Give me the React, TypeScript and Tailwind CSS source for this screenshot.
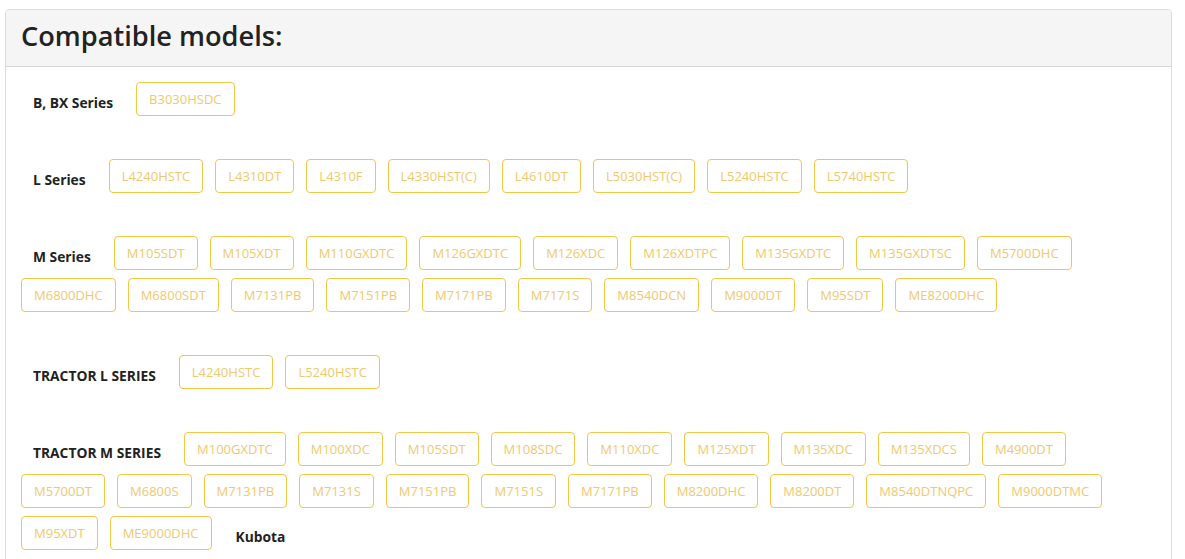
import React from 'react';

type Section = {
  title: string;
  models: string[];
  tail?: string;
};

const sections: Section[] = [
  { title: 'B, BX Series', models: ['B3030HSDC'] },
  {
    title: 'L Series',
    models: ['L4240HSTC', 'L4310DT', 'L4310F', 'L4330HST(C)', 'L4610DT', 'L5030HST(C)', 'L5240HSTC', 'L5740HSTC'],
  },
  {
    title: 'M Series',
    models: [
      'M105SDT', 'M105XDT', 'M110GXDTC', 'M126GXDTC', 'M126XDC', 'M126XDTPC', 'M135GXDTC', 'M135GXDTSC', 'M5700DHC',
      'M6800DHC', 'M6800SDT', 'M7131PB', 'M7151PB', 'M7171PB', 'M7171S', 'M8540DCN', 'M9000DT', 'M95SDT', 'ME8200DHC',
    ],
  },
  { title: 'TRACTOR L SERIES', models: ['L4240HSTC', 'L5240HSTC'] },
  {
    title: 'TRACTOR M SERIES',
    models: [
      'M100GXDTC', 'M100XDC', 'M105SDT', 'M108SDC', 'M110XDC', 'M125XDT', 'M135XDC', 'M135XDCS', 'M4900DT',
      'M5700DT', 'M6800S', 'M7131PB', 'M7131S', 'M7151PB', 'M7151S', 'M7171PB', 'M8200DHC', 'M8200DT', 'M8540DTNQPC',
      'M9000DTMC', 'M95XDT', 'ME9000DHC',
    ],
    tail: 'Kubota',
  },
];

const Label = ({ children }: { children: React.ReactNode }) => (
  <span className="ml-[12px] mr-[11px] mt-[11px] text-[13.8px] font-bold leading-[20px] text-[#222]">{children}</span>
);

export default function App() {
  return (
    <div className="min-h-screen bg-white pt-[9px] pl-[5px] pr-[13px] font-['Open_Sans','Noto_Sans',sans-serif]">
      <div className="rounded-t-[4px] border border-[#dcdcdc]">
        <div className="rounded-t-[4px] border-b border-[#d6d6d6] bg-[#f5f5f5] px-[15px] h-[57px] flex items-center">
          <h2 className="text-[27.2px] font-semibold leading-none text-[#222] -mt-[5px]">Compatible models:</h2>
        </div>
        <div className="px-[15px] pt-[15px] pb-[20px]">
          {sections.map((s) => (
            <div key={s.title} className="mb-[35px] flex flex-wrap items-start gap-x-[12px]">
              <Label>{s.title}</Label>
              {s.models.map((m, i) => (
                <button
                  key={m + i}
                  className="mb-[8px] h-[34px] rounded-[4px] border border-[#f2c744] bg-white px-[12px] text-[13px] leading-[20px] text-[#f0c96e]"
                >
                  {m}
                </button>
              ))}
              {s.tail && <Label>{s.tail}</Label>}
            </div>
          ))}
        </div>
      </div>
    </div>
  );
}
